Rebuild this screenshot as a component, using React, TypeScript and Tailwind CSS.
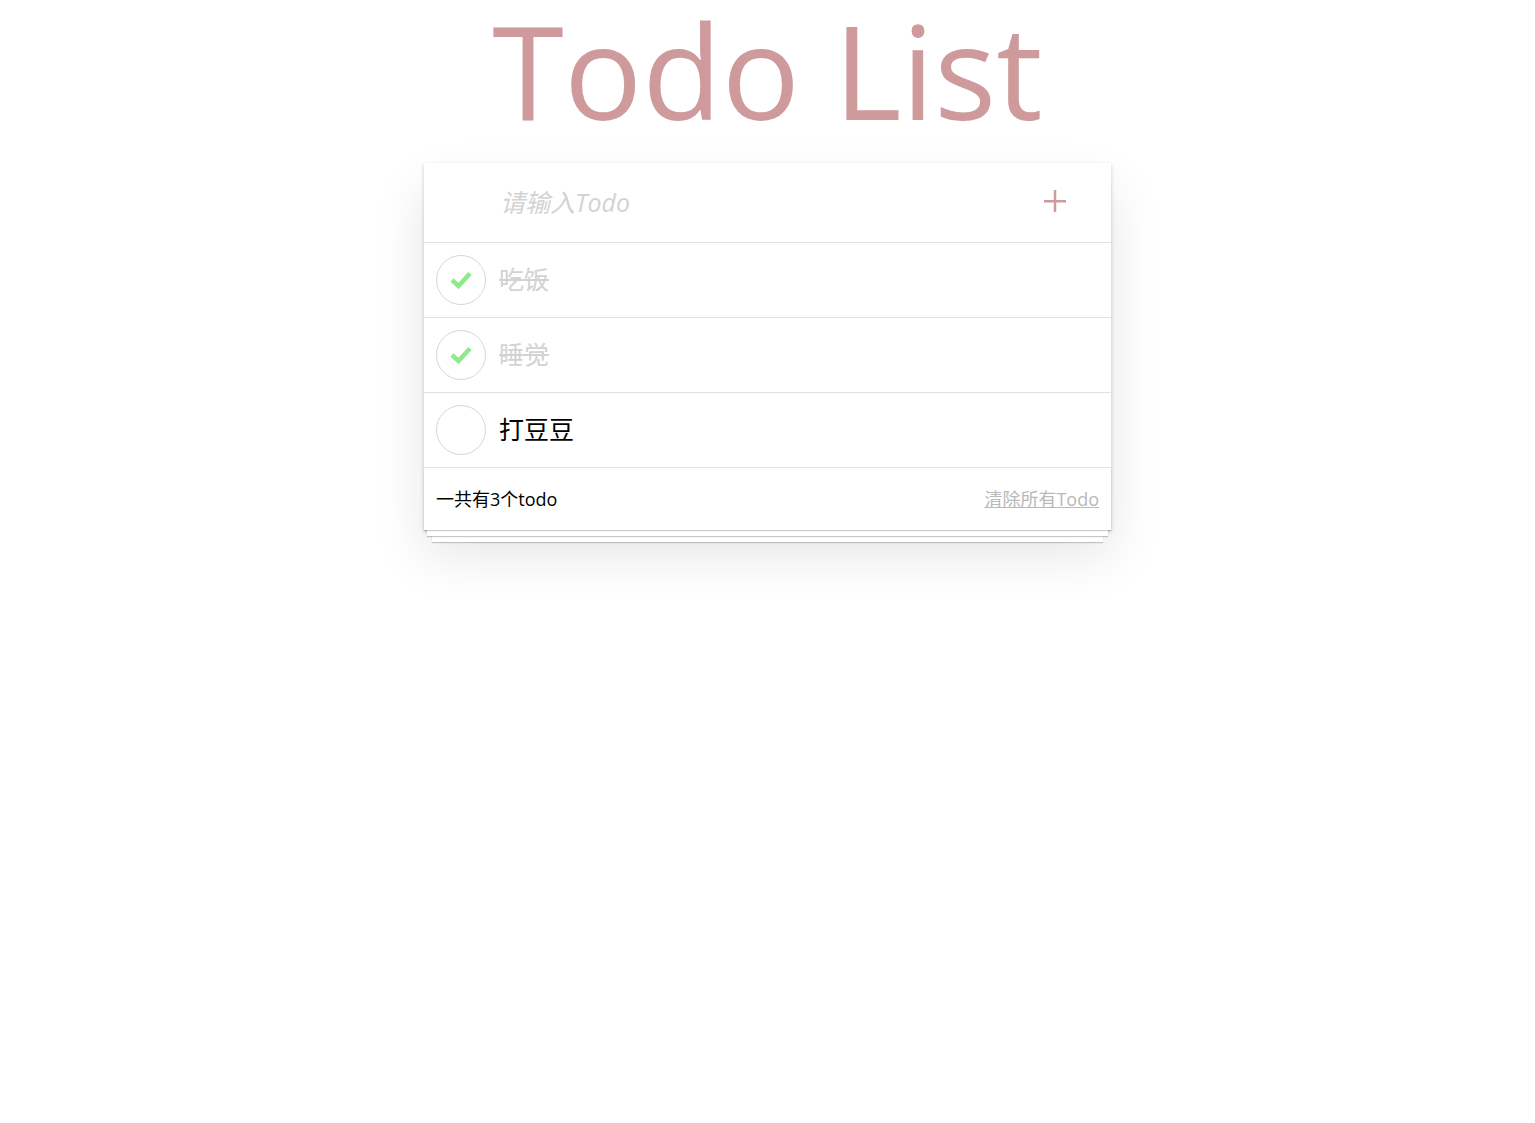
import React, { useState } from 'react';

type Todo = { id: number; text: string; done: boolean };

const initial: Todo[] = [
  { id: 1, text: '吃饭', done: true },
  { id: 2, text: '睡觉', done: true },
  { id: 3, text: '打豆豆', done: false },
];

const font = "font-['Segoe_UI','Open_Sans','Noto_Sans','Noto_Sans_CJK_SC',sans-serif]";

const App: React.FC = () => {
  const [todos, setTodos] = useState<Todo[]>(initial);
  const [value, setValue] = useState('');

  const add = () => {
    if (!value.trim()) return;
    setTodos([...todos, { id: Date.now(), text: value.trim(), done: false }]);
    setValue('');
  };

  const toggle = (id: number) =>
    setTodos(todos.map((t) => (t.id === id ? { ...t, done: !t.done } : t)));

  return (
    <div className={`min-h-screen bg-white ${font}`}>
      <h1 className="text-center text-[130px] leading-[140px] font-normal text-[#cf9a9c] mb-[23px]">
        Todo List
      </h1>

      <div className="w-[687px] mx-auto bg-white shadow-[0_2px_4px_rgba(0,0,0,0.2),0_25px_50px_rgba(0,0,0,0.1)]">
        {/* input */}
        <div className="flex items-center h-[80px] border-b border-[#e1e1e1]">
          <input
            value={value}
            onChange={(e) => setValue(e.target.value)}
            onKeyDown={(e) => e.key === 'Enter' && add()}
            placeholder="请输入Todo"
            className="flex-1 h-full pl-[76px] pb-[2px] text-[25px] italic outline-none bg-transparent placeholder:text-[#d3d3d3] placeholder:italic"
          />
          <button onClick={add} className="w-[24px] h-[24px] mr-[44px] mb-[3px] flex items-center justify-center">
            <svg width="22" height="22" viewBox="0 0 22 22">
              <rect x="0" y="10" width="22" height="2.5" fill="#cf9a9c" />
              <rect x="9.75" y="0" width="2.5" height="22" fill="#cf9a9c" />
            </svg>
          </button>
        </div>

        {/* list */}
        {todos.map((t) => (
          <div key={t.id} className="flex items-center h-[75px] border-b border-[#e1e1e1]">
            <button
              onClick={() => toggle(t.id)}
              className="ml-[12px] w-[50px] h-[50px] rounded-full border border-[#d6d6d6] flex items-center justify-center shrink-0"
            >
              {t.done && (
                <svg width="24" height="20" viewBox="0 0 24 20">
                  <path d="M3 10 L9.5 16 L21 3.5" fill="none" stroke="#8eea8b" strokeWidth="4.6" strokeLinecap="butt" />
                </svg>
              )}
            </button>
            <span
              className={`ml-[13px] text-[25px] ${t.done ? 'text-[#d2d2d2] line-through' : 'text-black'}`}
            >
              {t.text}
            </span>
          </div>
        ))}

        {/* footer */}
        <div className="flex items-center justify-between h-[62px] px-[12px] text-[18px] shadow-[0_1px_1px_rgba(0,0,0,0.2),0_9px_0_-3px_#ffffff,0_10px_1px_-3px_rgba(0,0,0,0.22),0_20px_0_-8px_#ffffff,0_21px_1px_-8px_rgba(0,0,0,0.2)]">
          <span className="text-black">一共有{todos.length}个todo</span>
          <button onClick={() => setTodos([])} className="text-[#b9b9b9] underline">
            清除所有Todo
          </button>
        </div>
      </div>
    </div>
  );
};

export default App;
